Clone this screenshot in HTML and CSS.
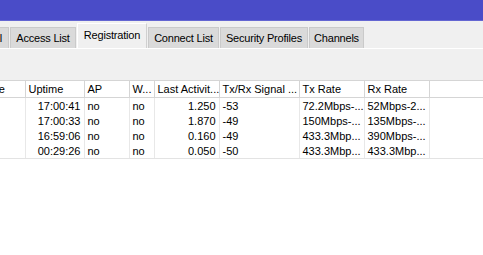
FILE: index.html
```html
<!DOCTYPE html>
<html lang="en">
<head>
    <meta charset="UTF-8">
    <title>Wireless Tables - Registration</title>
    <link rel="stylesheet" href="styles.css">
</head>
<body>

<div class="titlebar"></div>

<div class="tabs">
    <div class="tab tab-cut">Nstreme Dual</div>
    <div class="tab tab-access">Access List</div>
    <div class="tab tab-reg active">Registration</div>
    <div class="tab tab-connect">Connect List</div>
    <div class="tab tab-security">Security Profiles</div>
    <div class="tab tab-channels">Channels</div>
</div>

<div class="toolbar"></div>

<div class="grid">
    <table>
        <colgroup>
            <col class="c-iface">
            <col class="c-uptime">
            <col class="c-ap">
            <col class="c-wds">
            <col class="c-last">
            <col class="c-signal">
            <col class="c-rate">
            <col class="c-rate">
            <col>
        </colgroup>
        <thead>
            <tr>
                <th>Interface</th>
                <th>Uptime</th>
                <th>AP</th>
                <th>W...</th>
                <th>Last Activit...</th>
                <th>Tx/Rx Signal ...</th>
                <th>Tx Rate</th>
                <th>Rx Rate</th>
                <th class="filler"></th>
            </tr>
        </thead>
        <tbody>
            <tr>
                <td></td>
                <td class="num">17:00:41</td>
                <td>no</td>
                <td>no</td>
                <td class="num">1.250</td>
                <td>-53</td>
                <td>72.2Mbps-...</td>
                <td>52Mbps-2...</td>
                <td class="filler"></td>
            </tr>
            <tr>
                <td></td>
                <td class="num">17:00:33</td>
                <td>no</td>
                <td>no</td>
                <td class="num">1.870</td>
                <td>-49</td>
                <td>150Mbps-...</td>
                <td>135Mbps-...</td>
                <td class="filler"></td>
            </tr>
            <tr>
                <td></td>
                <td class="num">16:59:06</td>
                <td>no</td>
                <td>no</td>
                <td class="num">0.160</td>
                <td>-49</td>
                <td>433.3Mbp...</td>
                <td>390Mbps-...</td>
                <td class="filler"></td>
            </tr>
            <tr>
                <td></td>
                <td class="num">00:29:26</td>
                <td>no</td>
                <td>no</td>
                <td class="num">0.050</td>
                <td>-50</td>
                <td>433.3Mbp...</td>
                <td>433.3Mbp...</td>
                <td class="filler"></td>
            </tr>
        </tbody>
    </table>
</div>

</body>
</html>
```

FILE: styles.css
```css
body {
    font-family: "Liberation Sans", Arial, sans-serif;
    font-size: 11px;
    color: #000;
    background: #fff;
    margin: 0;
    padding: 0;
    overflow: hidden;
}

.titlebar {
    height: 21px;
    background: #4a4cc8;
    border-bottom: 1px solid #6466d2;
    box-sizing: border-box;
}

.tabs {
    display: flex;
    align-items: flex-end;
    height: 28px;
    padding-top: 3px;
    box-sizing: border-box;
    background: #f0f0f0;
    border-bottom: 1px solid #fff;
    overflow: hidden;
}

.tab {
    flex: none;
    height: 21px;
    line-height: 20px;
    margin-right: 1px;
    background: #dadada;
    border: 1px solid #cacaca;
    border-bottom: none;
    box-sizing: border-box;
    white-space: nowrap;
    text-align: center;
    letter-spacing: -0.2px;
    overflow: hidden;
}

/* scrolled off to the left, only its tail shows */
.tab-cut {
    width: 90px;
    margin-left: -81px;
    padding-right: 6px;
    text-align: right;
}

.tab-access { width: 66px; }
.tab-reg { width: 70px; }
.tab-connect { width: 71px; }
.tab-security { width: 88px; }
.tab-channels { width: 55px; }

.tab.active {
    height: 26px;
    line-height: 22px;
    margin-bottom: -1px;
    background: #f0f0f0;
    border-color: #fff #d0d0d0 #f0f0f0 #fff;
}

.toolbar {
    height: 31px;
    background: #f0f0f0;
}

.grid {
    overflow: hidden;
    background: #fff;
}

table {
    border-collapse: collapse;
    table-layout: fixed;
    width: 524px;
    margin-left: -41px;
}

.c-iface { width: 66px; }
.c-uptime { width: 59px; }
.c-ap { width: 45px; }
.c-wds { width: 25px; }
.c-last { width: 65px; }
.c-signal { width: 80px; }
.c-rate { width: 65px; }

th, td {
    padding: 0 3px;
    text-align: left;
    font-weight: normal;
    white-space: nowrap;
    overflow: hidden;
}

th {
    height: 16px;
    border-top: 1px solid #d5d5d5;
    border-bottom: 1px solid #d5d5d5;
    border-right: 1px solid #d5d5d5;
    background: #fff;
}

td {
    height: 15px;
    border-right: 1px solid #e8e8e8;
}

td.num {
    text-align: right;
}

th.filler, td.filler {
    border-right: none;
}

tbody tr:last-child td {
    border-bottom: 1px solid #e3e3e3;
}
```
